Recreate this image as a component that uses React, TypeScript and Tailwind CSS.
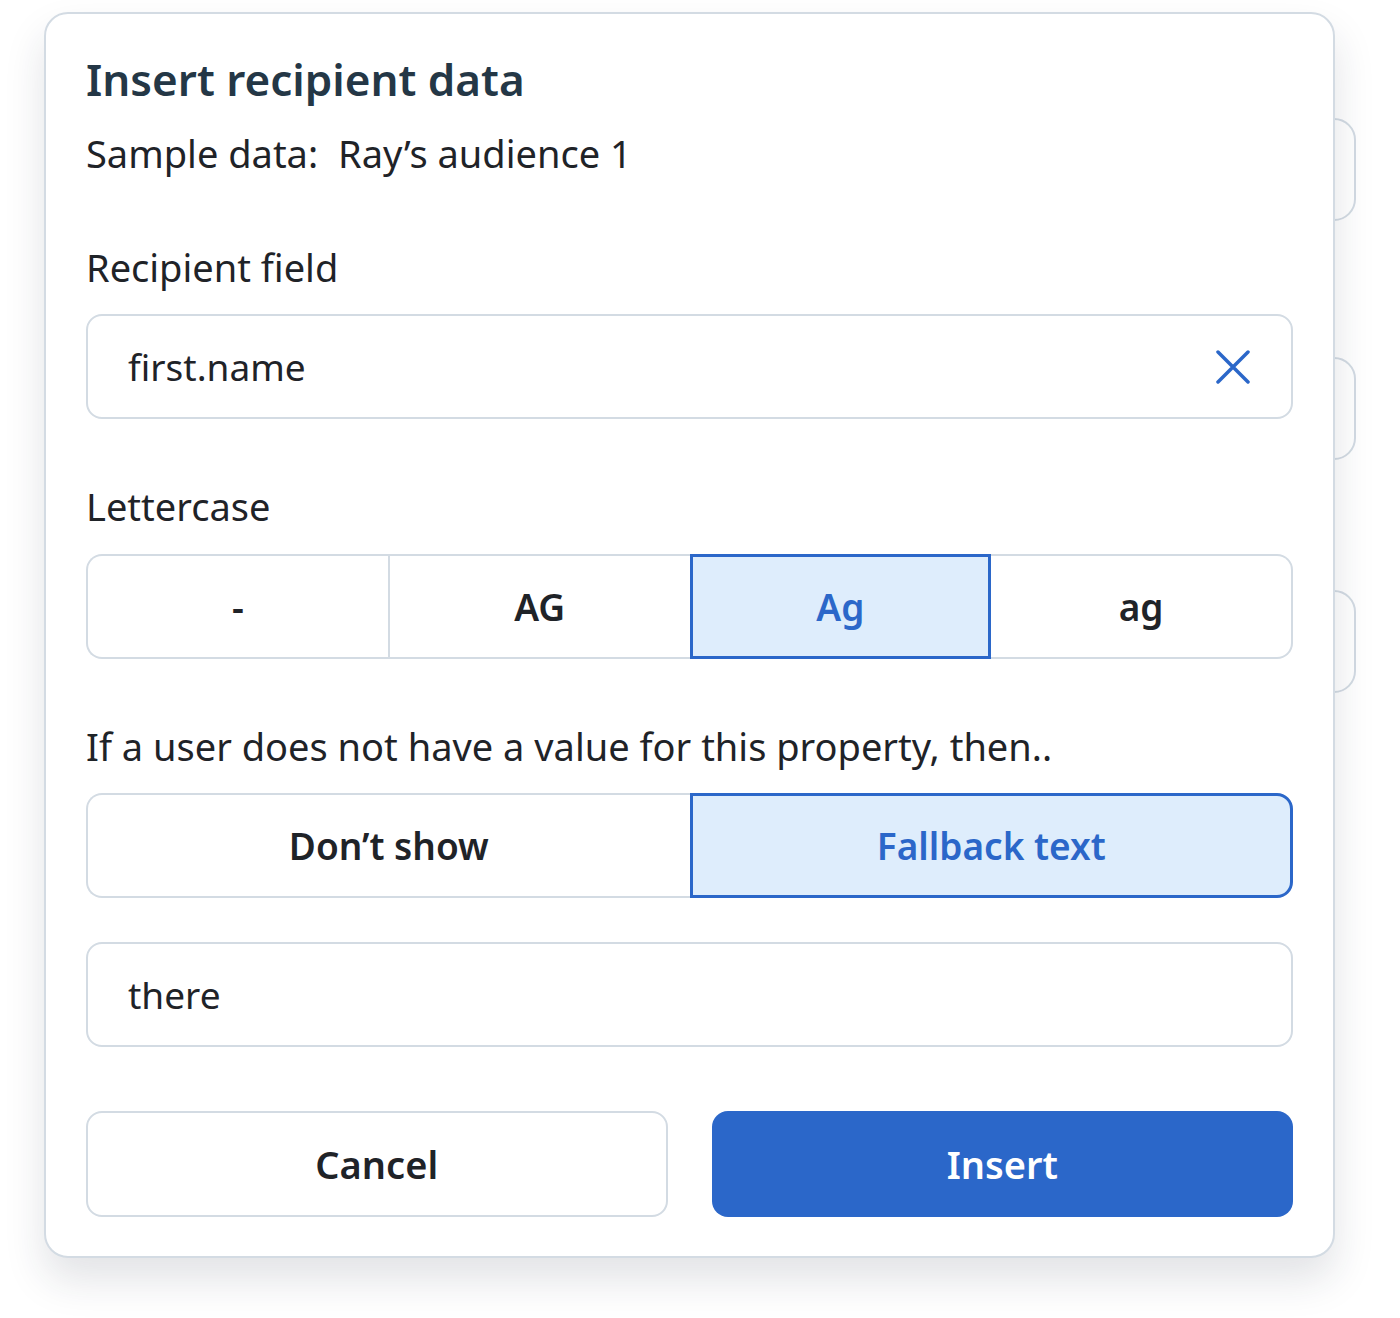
import React from "react";

const FONT = { fontFamily: '"Noto Sans", "Open Sans", sans-serif' };

type Seg = { label: string; selected?: boolean };

function SegmentGroup({ items }: { items: Seg[] }) {
  const cols = items.length === 4 ? "grid-cols-4" : "grid-cols-2";
  return (
    <div className={`grid ${cols} h-[105px]`}>
      {items.map((it, i) => {
        const first = i === 0;
        const last = i === items.length - 1;
        const prevSelected = i > 0 && items[i - 1].selected;
        let cls = "flex items-center justify-center text-[37px] font-semibold ";
        if (it.selected) {
          cls += "border-[3px] border-[#2b67c9] bg-[#deedfc] text-[#2b67c9] ";
        } else {
          cls += "border-y-2 border-[#d3dbe3] bg-white text-[#1f2328] ";
          if (first) cls += "border-l-2 ";
          else if (!prevSelected) cls += "border-l-2 ";
          if (last) cls += "border-r-2 ";
        }
        if (first) cls += "rounded-l-[16px] ";
        if (last) cls += "rounded-r-[16px] ";
        return (
          <div key={it.label} className={cls}>
            {it.label}
          </div>
        );
      })}
    </div>
  );
}

function TextBox({ value, clearable }: { value: string; clearable?: boolean }) {
  return (
    <div className="flex h-[105px] items-center justify-between rounded-[16px] border-2 border-[#d3dbe3] bg-white pl-[40px] pr-[41px]">
      <span className="text-[37px] leading-[48px] text-[#1f2328]">{value}</span>
      {clearable && (
        <svg width="34" height="34" viewBox="0 0 34 34" fill="none">
          <path d="M2 2 32 32M32 2 2 32" stroke="#2b67c9" strokeWidth="3.5" strokeLinecap="round" />
        </svg>
      )}
    </div>
  );
}

export default function App() {
  return (
    <div className="relative h-[1318px] w-[1400px] overflow-hidden bg-white" style={FONT}>
      {/* cards behind the dialog */}
      <div className="absolute left-[1150px] top-[118px] h-[103px] w-[206px] rounded-r-[22px] border-2 border-[#d3dbe3] bg-white" />
      <div className="absolute left-[1150px] top-[357px] h-[103px] w-[206px] rounded-r-[22px] border-2 border-[#d3dbe3] bg-white" />
      <div className="absolute left-[1150px] top-[590px] h-[103px] w-[206px] rounded-r-[22px] border-2 border-[#d3dbe3] bg-white" />

      <div className="relative z-10 ml-[44px] mt-[12px] w-[1291px] rounded-[24px] border-2 border-[#d3dbe3] bg-white px-[40px] pb-[39px] pt-[35px] shadow-[0_22px_40px_rgba(30,40,60,0.13)]">
        <h1 className="text-[44px] font-semibold leading-[60px] text-[#243746]">Insert recipient data</h1>
        <div className="mt-[20px] flex gap-[20px] text-[38px] leading-[48px] text-[#1f2328]">
          <span>Sample data:</span>
          <span>Ray’s audience 1</span>
        </div>

        <div className="mt-[66px] text-[38px] leading-[48px] text-[#1f2328]">Recipient field</div>
        <div className="mt-[23px]">
          <TextBox value="first.name" clearable />
        </div>

        <div className="mt-[63px] text-[38px] leading-[48px] text-[#1f2328]">Lettercase</div>
        <div className="mt-[24px]">
          <SegmentGroup
            items={[{ label: "-" }, { label: "AG" }, { label: "Ag", selected: true }, { label: "ag" }]}
          />
        </div>

        <div className="mt-[63px] text-[38px] leading-[48px] text-[#1f2328]">
          If a user does not have a value for this property, then..
        </div>
        <div className="mt-[23px]">
          <SegmentGroup items={[{ label: "Don’t show" }, { label: "Fallback text", selected: true }]} />
        </div>

        <div className="mt-[44px]">
          <TextBox value="there" />
        </div>

        <div className="mt-[64px] grid grid-cols-2 gap-[44px]">
          <button className="h-[106px] rounded-[16px] border-2 border-[#d3dbe3] bg-white text-[38px] font-semibold text-[#1f2328]">
            Cancel
          </button>
          <button className="h-[106px] rounded-[16px] bg-[#2b67c9] text-[38px] font-semibold text-white">
            Insert
          </button>
        </div>
      </div>
    </div>
  );
}
